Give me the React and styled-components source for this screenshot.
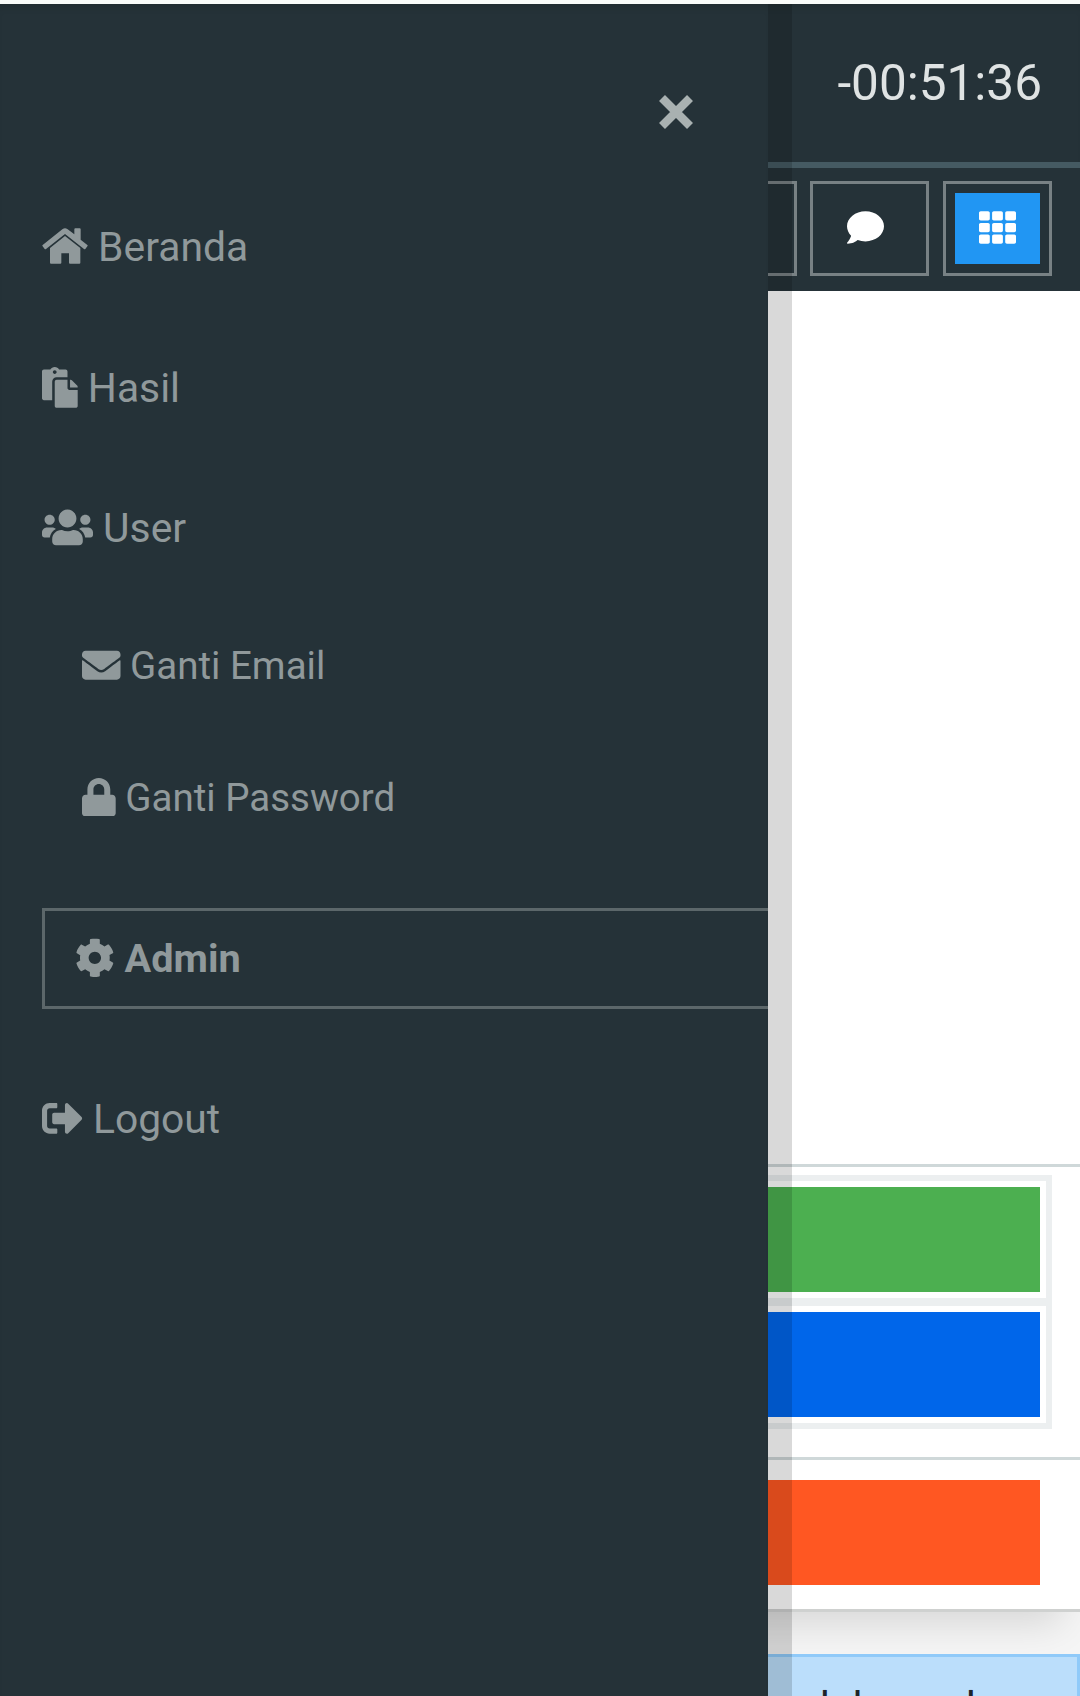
import React from "react";
import styled, { createGlobalStyle } from "styled-components";
import {
  FaPaste,
  FaUsers,
  FaEnvelope,
  FaLock,
  FaCog,
  FaSignOutAlt,
  FaComment,
  FaTh,
} from "react-icons/fa";

const GlobalStyle = createGlobalStyle`
  * { box-sizing: border-box; }
  body {
    margin: 0;
    background: #f5f5f5;
    font-family: Roboto, "Liberation Sans", sans-serif;
    overflow: hidden;
  }
`;

const Page = styled.div`
  height: 1696px;
  overflow: hidden;
  border-top: 4px solid #fafcfa;
`;

const Card = styled.main`
  background: #fff;
  border-bottom: 3px solid #cfd1d0;
  box-shadow: 0 30px 36px -18px rgba(0, 0, 0, 0.12);
`;

const TopBar = styled.header`
  display: flex;
  justify-content: flex-end;
  height: 164px;
  padding: 50px 38px 0 0;
  background: #253238;
  border-bottom: 6px solid #455a62;
  box-shadow: inset 0 8px 8px -6px rgba(0, 0, 0, 0.15);
`;

const Timer = styled.div`
  font-size: 49.5px;
  line-height: 58px;
  color: #dfe3e3;
`;

const Toolbar = styled.nav`
  display: flex;
  justify-content: flex-end;
  height: 123px;
  padding: 13px 28px 15px 0;
  background: #253238;
`;

const ToolButton = styled.button`
  display: flex;
  align-items: center;
  justify-content: center;
  width: ${(p) => (p.$filled ? 109 : 119)}px;
  height: 95px;
  margin-left: ${(p) => (p.$filled ? 14 : 13)}px;
  padding: ${(p) => (p.$filled ? 0 : "0 9px 0 0")};
  border: 3px solid #788184;
  background: transparent;
  color: #fff;
  font-size: 37px;
`;

const ToolFace = styled.span`
  display: flex;
  align-items: center;
  justify-content: center;
  flex: none;
  width: 85px;
  height: 71px;
  padding-bottom: 2px;
  background: ${(p) => (p.$active ? "#2196f3" : "transparent")};
`;

const Question = styled.section`
  height: 873px;
`;

const Choices = styled.section`
  height: 296px;
  padding: 8px 28px 0 0;
  border-top: 3px solid #cfd8d9;
  border-bottom: 3px solid #cfd8d9;
`;

const ChoiceList = styled.div`
  display: grid;
  gap: 8px;
  padding: 6px 6px 6px 0;
  background: #eceff0;
`;

const Choice = styled.div`
  padding: 6px 6px 6px 0;
  background: #fff;
`;

const Bar = styled.div`
  height: 105px;
  background: ${(p) => p.$color};
`;

const Footer = styled.section`
  padding: 20px 40px 24px 0;
`;

const Notice = styled.aside`
  position: relative;
  margin-top: 42px;
  height: 140px;
  padding: 26px 101px 0 0;
  border: 3px solid #90caf9;
  background: #bbdefb;
  color: #1c2329;
  font-size: 42px;
  line-height: 50px;
  text-align: right;
  word-spacing: 11px;
`;

const Drawer = styled.aside`
  position: fixed;
  top: 4px;
  left: 0;
  bottom: 0;
  width: 792px;
  border-right: 24px solid rgba(0, 0, 0, 0.15);
  background: #253238;
  background-clip: padding-box;
  box-shadow: inset 0 8px 8px -6px rgba(0, 0, 0, 0.15);
  color: #90999b;
  overflow: hidden;
`;

const DrawerTop = styled.div`
  display: flex;
  justify-content: flex-end;
  height: 173px;
  padding: 91px 75px 0 0;
`;

const CloseIcon = styled.svg`
  width: 34px;
  height: 34px;
  stroke: #a9b1b1;
  stroke-width: 8.4;
`;

const MenuItem = styled.a`
  display: block;
  height: ${(p) => (p.$sub ? 132 : 141)}px;
  padding-left: ${(p) => (p.$sub ? 82 : 42)}px;
  font-size: ${(p) => (p.$sub ? 38.5 : 40.8)}px;
  line-height: ${(p) => (p.$sub ? 132 : 141)}px;
  white-space: pre;
`;

const UserItem = styled(MenuItem)`
  line-height: 139px;
`;

const AdminItem = styled.a`
  display: block;
  height: 101px;
  margin: 44px -3px 40px 42px;
  padding-left: 30px;
  border: 3px solid #5c676a;
  font-size: 39.7px;
  font-weight: 700;
  line-height: 95px;
  white-space: pre;
`;

const Icon = styled.span`
  svg {
    width: ${(p) => p.$ratio}em;
    height: 1em;
    vertical-align: -0.135em;
  }
`;

const HomeIcon = styled.svg`
  width: 46px;
  height: 36px;
  fill: currentColor;
  vertical-align: -3px;
`;

function Home() {
  return (
    <HomeIcon viewBox="0 0 138 108">
      <path d="M62 3Q69 -2 76 3L97 19V4Q97 1 100 1H113Q116 1 116 4V35L136 51Q138 53 136 55L130 63Q128 65 126 63L69 18L12 63Q10 65 8 63L2 55Q0 53 2 51Z" />
      <path d="M69 24L115 60V104Q115 107 112 107H84Q81 107 81 104V76H58V104Q58 107 55 107H27Q24 107 24 104V60Z" />
    </HomeIcon>
  );
}

export default function App() {
  return (
    <>
      <GlobalStyle />
      <Page>
        <Card>
          <TopBar>
            <Timer>-00:51:36</Timer>
          </TopBar>
          <Toolbar>
            <ToolButton />
            <ToolButton>
              <ToolFace><FaComment /></ToolFace>
            </ToolButton>
            <ToolButton $filled>
              <ToolFace $active><FaTh /></ToolFace>
            </ToolButton>
          </Toolbar>
          <Question />
          <Choices>
            <ChoiceList>
              <Choice><Bar $color="#4caf50" /></Choice>
              <Choice><Bar $color="#0066ea" /></Choice>
            </ChoiceList>
          </Choices>
          <Footer>
            <Bar $color="#ff5722" />
          </Footer>
        </Card>
        <Notice>jumlah soal</Notice>
      </Page>
      <Drawer>
        <DrawerTop>
          <CloseIcon viewBox="0 0 34 34">
            <path d="M3 3L31 31M31 3L3 31" />
          </CloseIcon>
        </DrawerTop>
        <MenuItem><Home /> Beranda</MenuItem>
        <MenuItem><Icon $ratio={0.875}><FaPaste /></Icon> Hasil</MenuItem>
        <UserItem><Icon $ratio={1.25}><FaUsers /></Icon> User</UserItem>
        <MenuItem $sub><Icon $ratio={1}><FaEnvelope /></Icon> Ganti Email</MenuItem>
        <MenuItem $sub><Icon $ratio={0.875}><FaLock /></Icon> Ganti Password</MenuItem>
        <AdminItem><Icon $ratio={1}><FaCog /></Icon> Admin</AdminItem>
        <MenuItem><Icon $ratio={1}><FaSignOutAlt /></Icon> Logout</MenuItem>
      </Drawer>
    </>
  );
}
